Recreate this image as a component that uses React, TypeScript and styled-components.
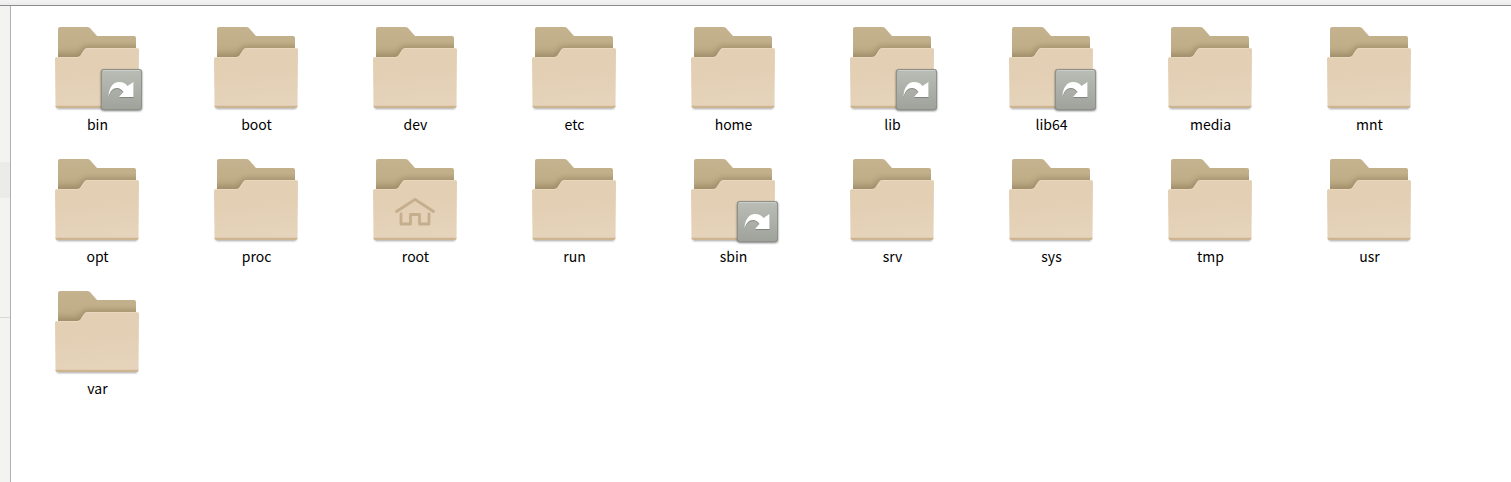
import React from "react";
import styled, { createGlobalStyle } from "styled-components";

const GlobalStyle = createGlobalStyle`
  * { box-sizing: border-box; }
  html, body, #root { height: 100%; }
  body {
    margin: 0;
    background: #fff;
    color: #000;
    font-family: "Noto Sans CJK SC", "Noto Sans", sans-serif;
    font-size: 14px;
    line-height: 18px;
  }
`;

const Window = styled.div`
  display: flex;
  flex-direction: column;
  min-height: 100%;
`;

const Toolbar = styled.header`
  height: 6px;
  flex: none;
  background: linear-gradient(#f3f3f3, #ececec);
  border-bottom: 1px solid #8b8b8b;
`;

const Body = styled.div`
  display: flex;
  flex: 1;
`;

const Sidebar = styled.nav`
  width: 11px;
  flex: none;
  display: flex;
  flex-direction: column;
  padding-top: 156px;
  background: #f3f3f2;
  border-right: 1px solid #b0b0b0;
`;

const SidebarItem = styled.div`
  height: 36px;
  background: #ebebea;
`;

const SidebarRule = styled.hr`
  width: 100%;
  height: 1px;
  margin: 119px 0 0;
  border: 0;
  background: #d8d8d7;
`;

const Files = styled.ul`
  flex: 1;
  display: grid;
  grid-template-columns: repeat(auto-fill, 159px);
  grid-auto-rows: 132px;
  align-content: start;
  margin: 0;
  padding: 14px 0 0 7px;
  list-style: none;
`;

const File = styled.li`
  display: flex;
  flex-direction: column;
  align-items: center;
`;

const Icon = styled.svg`
  display: block;
  width: 97px;
  height: 95px;
`;

const Definitions = styled.svg`
  display: block;
  width: 0;
  height: 0;
`;

const Name = styled.span`
  white-space: nowrap;
`;

type Emblem = "link" | "home";

const BACK =
  "M9 39V9q0-2 2-2h27q2 0 3 1l7 8h37q2 0 2 2v21z";
const FRONT =
  "M6 39q0-2 2-2h20q2 0 3-1l4-6q1-2 3-2h50q2 0 2 2L89.500 86q0 2-2 2h-79q-2 0-2-2z";

const Defs = () => (
  <Definitions aria-hidden="true">
    <defs>
      <linearGradient id="back" x1="0" y1="0" x2="0" y2="1">
        <stop offset="0" stopColor="#c5b38f" />
        <stop offset="0.6" stopColor="#c0ae89" />
        <stop offset="1" stopColor="#b09d78" />
      </linearGradient>
      <linearGradient id="front" x1="0" y1="0" x2="0.15" y2="1">
        <stop offset="0" stopColor="#e3cfb3" />
        <stop offset="0.5" stopColor="#e3cfb4" />
        <stop offset="1" stopColor="#e5d4bb" />
      </linearGradient>
      <linearGradient id="badge" x1="0" y1="0" x2="0" y2="1">
        <stop offset="0" stopColor="#babdb6" />
        <stop offset="1" stopColor="#a0a39c" />
      </linearGradient>
      <filter id="soft" x="-10%" y="-20%" width="120%" height="150%">
        <feGaussianBlur stdDeviation="1.2" />
      </filter>
      <filter id="softer" x="-10%" y="-10%" width="120%" height="120%">
        <feGaussianBlur stdDeviation="2.5" />
      </filter>
      <clipPath id="backClip">
        <path d={BACK} />
      </clipPath>
    </defs>
  </Definitions>
);

const Folder = ({ emblem }: { emblem?: Emblem }) => (
  <Icon viewBox="0 0 97 95" aria-hidden="true">
    <path d="M8 84h80v5H8z" fill="#000" opacity="0.35" filter="url(#soft)" />
    <path d={BACK} fill="url(#back)" />
    <g clipPath="url(#backClip)">
      <path d={FRONT} fill="none" stroke="#6b5a38" strokeWidth="5" opacity="0.3" filter="url(#softer)" />
    </g>
    <path d={FRONT} fill="url(#front)" />
    <path d="M7 37.500h21q3 0 4-2l4-6q1-1 3-1h49" fill="none" stroke="#eddcc5" opacity="0.6" />
    <path d="M6.500 86q0 2 2 2h79q2 0 2-2v-.3h-83z" fill="#cdb592" />
    {emblem === "home" && (
      <g fill="none" stroke="#c5ae8e" strokeWidth="2.800" strokeLinecap="round" strokeLinejoin="round">
        <path d="M29.500 59.500 48 47.300l18.500 12.200" />
        <path d="M34 62v10h9.500V62.500h9V72H62V62" />
      </g>
    )}
    {emblem === "link" && (
      <g>
        <rect x="52" y="50" width="41" height="41" rx="3" fill="#000" opacity="0.5" filter="url(#soft)" />
        <rect x="52" y="49" width="41" height="41" rx="3" fill="#8e918a" />
        <rect x="53" y="50" width="39" height="39" rx="2" fill="url(#badge)" />
        <path d="M54 50.500h37" stroke="#cbcdc8" />
        <path d="M59.500 78C59.500 69 64 63 70 63c4 0 6.500 1.500 8.500 4l6-4v15H70l4.500-5c-2-2.500-4-4-6.500-4-4 0-7 3-8.500 9z" fill="#5c5e59" opacity="0.5" />
        <path d="M59.500 77C59.500 68 64 62 70 62c4 0 6.500 1.500 8.500 4l6-4v15H70l4.500-5c-2-2.500-4-4-6.500-4-4 0-7 3-8.500 9z" fill="#fff" />
      </g>
    )}
  </Icon>
);

const files: { name: string; emblem?: Emblem }[] = [
  { name: "bin", emblem: "link" },
  { name: "boot" },
  { name: "dev" },
  { name: "etc" },
  { name: "home" },
  { name: "lib", emblem: "link" },
  { name: "lib64", emblem: "link" },
  { name: "media" },
  { name: "mnt" },
  { name: "opt" },
  { name: "proc" },
  { name: "root", emblem: "home" },
  { name: "run" },
  { name: "sbin", emblem: "link" },
  { name: "srv" },
  { name: "sys" },
  { name: "tmp" },
  { name: "usr" },
  { name: "var" },
];

export default function App() {
  return (
    <Window>
      <GlobalStyle />
      <Toolbar />
      <Body>
        <Sidebar>
          <SidebarItem />
          <SidebarRule />
        </Sidebar>
        <Files>
          {files.map((file) => (
            <File key={file.name}>
              <Folder emblem={file.emblem} />
              <Name>{file.name}</Name>
            </File>
          ))}
        </Files>
      </Body>
      <Defs />
    </Window>
  );
}
